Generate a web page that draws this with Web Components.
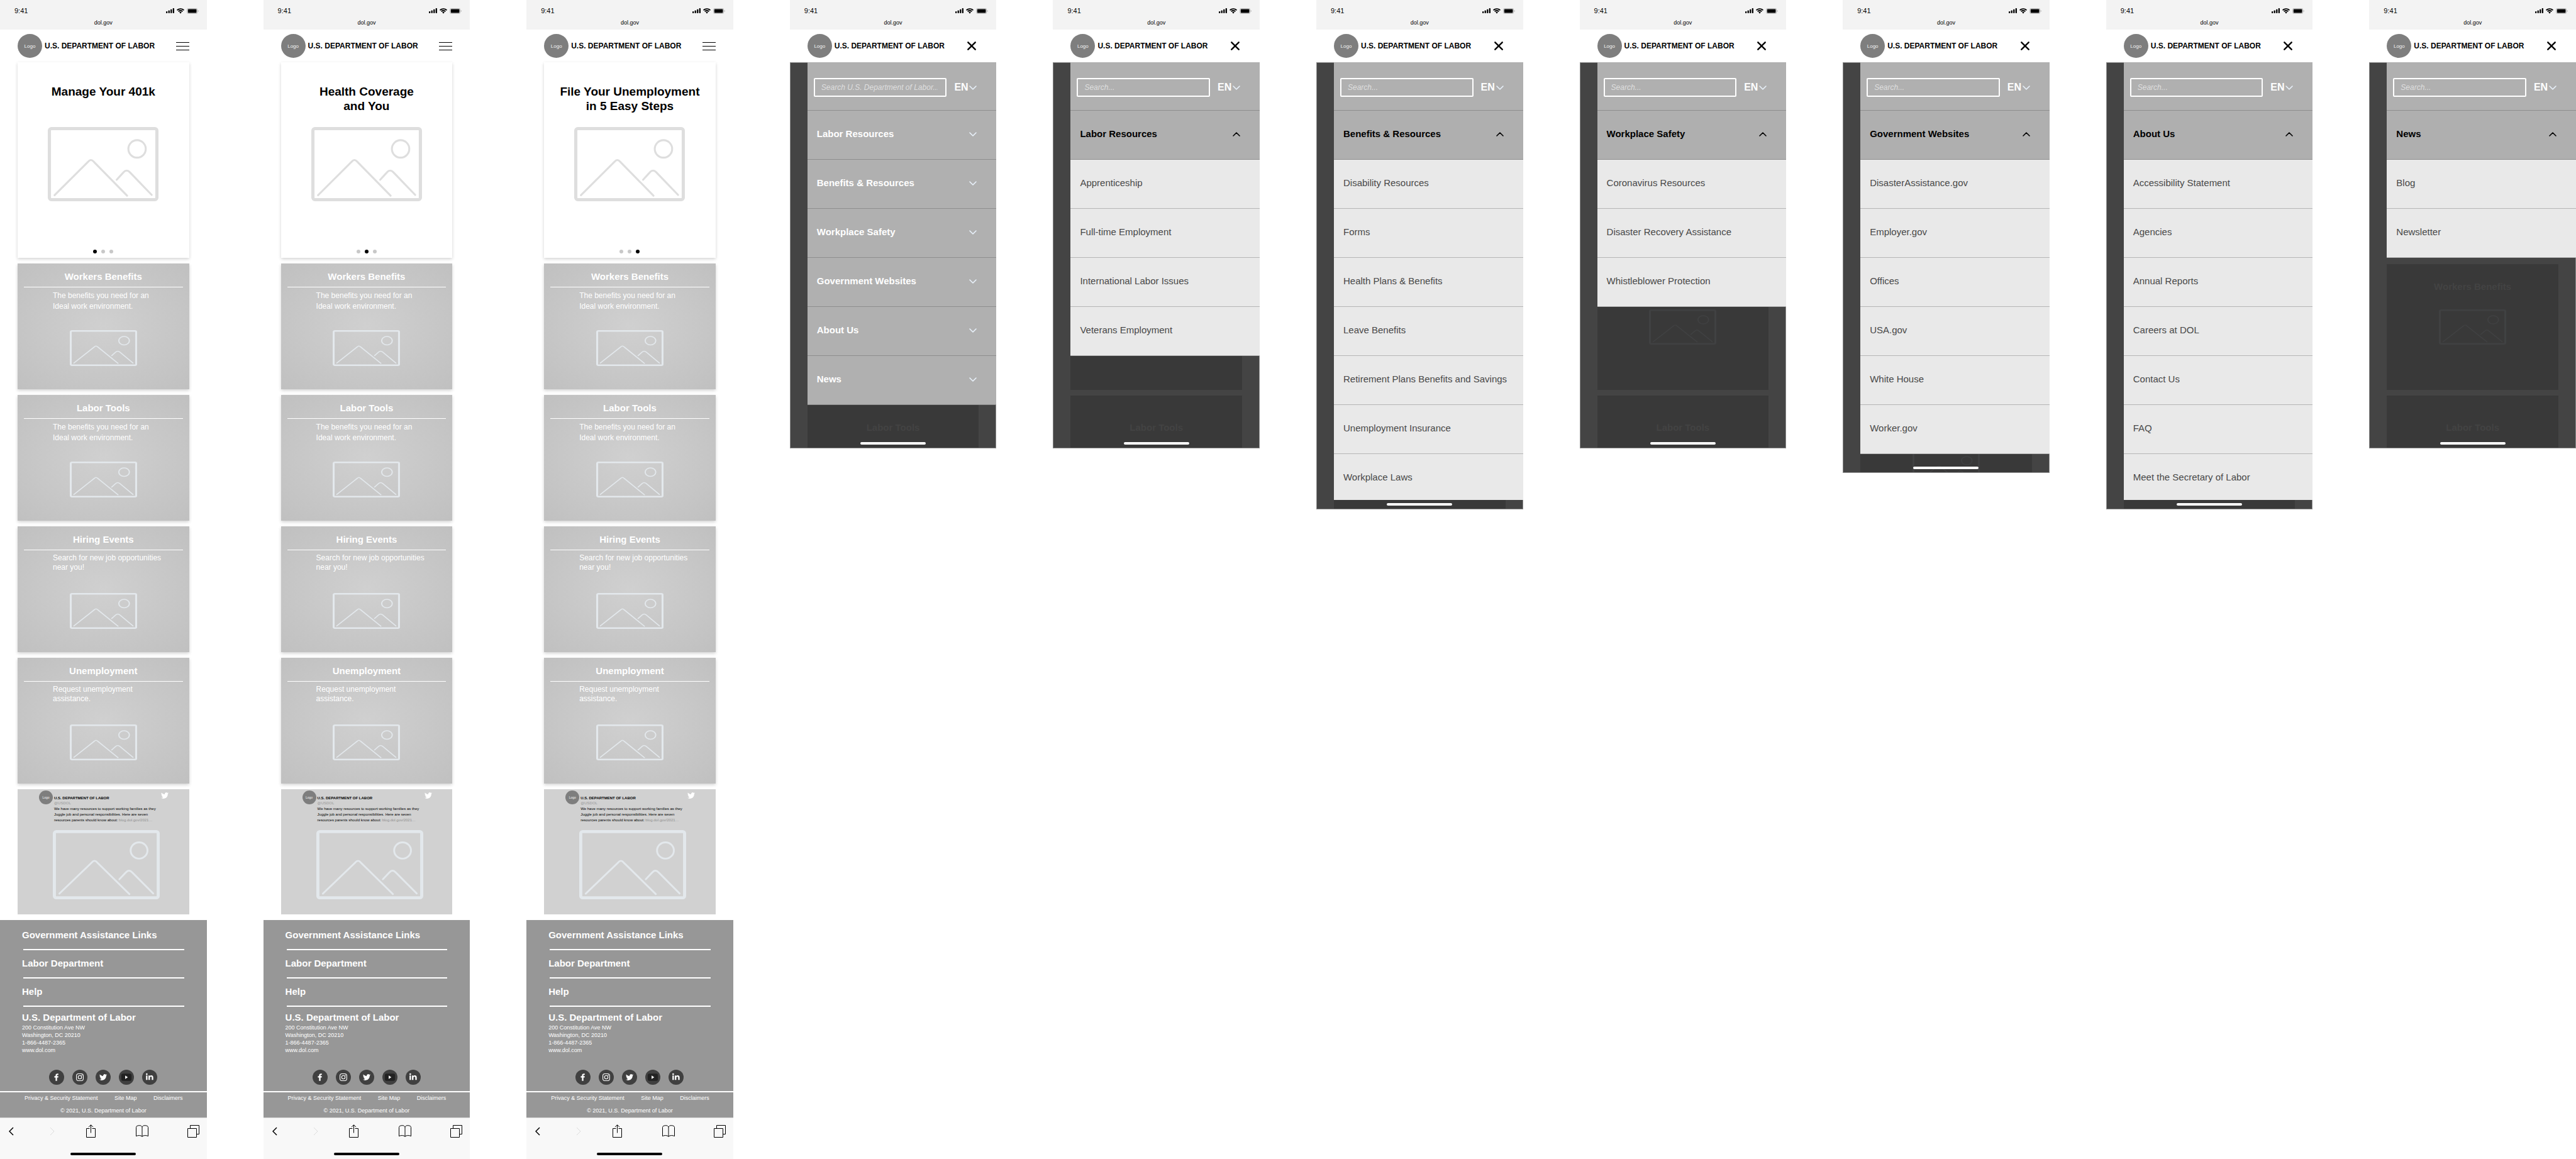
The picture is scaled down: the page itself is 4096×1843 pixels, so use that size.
<!DOCTYPE html>
<html lang="en">
<head>
<meta charset="utf-8">
<title>U.S. Department of Labor – mobile screens</title>
<style>
  body { margin: 0; background: #fff; font-family: "Liberation Sans", Arial, Helvetica, sans-serif; color: #000; }
  main { display: flex; align-items: flex-start; gap: 90px; }
  main > * { flex: 1 1 0; min-width: 0; }
</style>
</head>
<body>
<main>
  <dol-home-screen slide="1">Manage Your 401k</dol-home-screen>
  <dol-home-screen slide="2">Health Coverage<br>and You</dol-home-screen>
  <dol-home-screen slide="3">File Your Unemployment<br>in 5 Easy Steps</dol-home-screen>

  <dol-menu-screen placeholder="Search U.S. Department of Labor..." peek="tools">
    <dol-menu-group>Labor Resources</dol-menu-group>
    <dol-menu-group>Benefits &amp; Resources</dol-menu-group>
    <dol-menu-group>Workplace Safety</dol-menu-group>
    <dol-menu-group>Government Websites</dol-menu-group>
    <dol-menu-group>About Us</dol-menu-group>
    <dol-menu-group>News</dol-menu-group>
  </dol-menu-screen>

  <dol-menu-screen peek="tools">
    <dol-menu-group open>Labor Resources</dol-menu-group>
    <dol-menu-link>Apprenticeship</dol-menu-link>
    <dol-menu-link>Full-time Employment</dol-menu-link>
    <dol-menu-link>International Labor Issues</dol-menu-link>
    <dol-menu-link>Veterans Employment</dol-menu-link>
  </dol-menu-screen>

  <dol-menu-screen tail="short">
    <dol-menu-group open>Benefits &amp; Resources</dol-menu-group>
    <dol-menu-link>Disability Resources</dol-menu-link>
    <dol-menu-link>Forms</dol-menu-link>
    <dol-menu-link>Health Plans &amp; Benefits</dol-menu-link>
    <dol-menu-link>Leave Benefits</dol-menu-link>
    <dol-menu-link>Retirement Plans Benefits and Savings</dol-menu-link>
    <dol-menu-link>Unemployment Insurance</dol-menu-link>
    <dol-menu-link end>Workplace Laws</dol-menu-link>
  </dol-menu-screen>

  <dol-menu-screen peek="tools">
    <dol-menu-group open>Workplace Safety</dol-menu-group>
    <dol-menu-link>Coronavirus Resources</dol-menu-link>
    <dol-menu-link>Disaster Recovery Assistance</dol-menu-link>
    <dol-menu-link>Whistleblower Protection</dol-menu-link>
  </dol-menu-screen>

  <dol-menu-screen>
    <dol-menu-group open>Government Websites</dol-menu-group>
    <dol-menu-link>DisasterAssistance.gov</dol-menu-link>
    <dol-menu-link>Employer.gov</dol-menu-link>
    <dol-menu-link>Offices</dol-menu-link>
    <dol-menu-link>USA.gov</dol-menu-link>
    <dol-menu-link>White House</dol-menu-link>
    <dol-menu-link>Worker.gov</dol-menu-link>
  </dol-menu-screen>

  <dol-menu-screen tail="short">
    <dol-menu-group open>About Us</dol-menu-group>
    <dol-menu-link>Accessibility Statement</dol-menu-link>
    <dol-menu-link>Agencies</dol-menu-link>
    <dol-menu-link>Annual Reports</dol-menu-link>
    <dol-menu-link>Careers at DOL</dol-menu-link>
    <dol-menu-link>Contact Us</dol-menu-link>
    <dol-menu-link>FAQ</dol-menu-link>
    <dol-menu-link end>Meet the Secretary of Labor</dol-menu-link>
  </dol-menu-screen>

  <dol-menu-screen peek="workers tools">
    <dol-menu-group open>News</dol-menu-group>
    <dol-menu-link>Blog</dol-menu-link>
    <dol-menu-link>Newsletter</dol-menu-link>
  </dol-menu-screen>
</main>

<script>
const BASE = `
  *, *::before, *::after { box-sizing: border-box; }
  :host { display: block; }
  h1, h2, h3, p, ul { margin: 0; padding: 0; }
  button { border: 0; padding: 0; background: none; font: inherit; color: inherit; display: block; cursor: pointer; }
  a { color: inherit; text-decoration: none; }
  svg { display: block; }
`;
const BIRD = 'M23.953 4.57a10 10 0 01-2.825.775 4.958 4.958 0 002.163-2.723c-.951.555-2.005.959-3.127 1.184a4.92 4.92 0 00-8.384 4.482C7.69 8.095 4.067 6.13 1.64 3.162a4.822 4.822 0 00-.666 2.475c0 1.71.87 3.213 2.188 4.096a4.904 4.904 0 01-2.228-.616v.06a4.923 4.923 0 003.946 4.827 4.996 4.996 0 01-2.212.085 4.936 4.936 0 004.604 3.417 9.867 9.867 0 01-6.102 2.105c-.39 0-.779-.023-1.17-.067a13.995 13.995 0 007.557 2.209c9.053 0 13.998-7.496 13.998-13.985 0-.21 0-.42-.015-.63A9.935 9.935 0 0024 4.59z';

function define(name, render) {
  customElements.define(name, class extends HTMLElement {
    constructor() {
      super();
      this.attachShadow({ mode: 'open' });
    }
    connectedCallback() {
      if (!this.shadowRoot.childNodes.length) this.shadowRoot.innerHTML = render(this);
    }
  });
}

/* Placeholder picture: frame, sun and two hills; stretches to its host box. */
define('dol-picture', () => `
  <style>${BASE}
    svg { width: 100%; height: 100%; }
    g { fill: none; stroke: currentColor; stroke-width: 4; stroke-linecap: round; stroke-linejoin: round; }
  </style>
  <svg viewBox="0 0 229 153" preserveAspectRatio="none" aria-hidden="true"><g>
    <rect x="3.3" y="3.3" width="222.4" height="146.4" rx="4" stroke-width="6.6"/>
    <circle cx="184.7" cy="45.1" r="18"/>
    <path d="M14 140.5 83.5 71.5Q89.3 64.5 95 71.5L164 141.5"/>
    <path d="M142.6 108.7 156.5 93.5Q163 86 170 93.5L215 140"/>
  </g></svg>`);

define('dol-status-bar', () => `
  <style>${BASE}
    :host { background: #f3f3f3; padding: 10px 13px 5px 23px; }
    .row { display: flex; align-items: center; justify-content: space-between; height: 14px; font-size: 11px; line-height: 14px; }
    .icons { display: flex; align-items: center; gap: 4px; }
    .url { margin-top: 6px; padding-right: 10px; font-size: 9px; line-height: 12px; text-align: center; }
    .url { margin-left: -10px; padding: 0; margin-right: 0; }
  </style>
  <div class="row"><span>9:41</span>
    <span class="icons">
      <svg width="13" height="8" viewBox="0 0 17 10.5"><rect y="6.6" width="3" height="3.9" rx="1"/><rect x="4.7" y="4.6" width="3" height="5.9" rx="1"/><rect x="9.3" y="2.3" width="3" height="8.2" rx="1"/><rect x="14" width="3" height="10.5" rx="1"/></svg>
      <svg width="12" height="9" viewBox="0 0 15.4 11"><path d="M7.7 2.3c2.2 0 4.300.85 5.900 2.350.12.120.31.120.43 0l1.150-1.150a.32.32 0 000-.46C11-1 4.400-1 .22 3.040a.32.32 0 000 .46L1.370 4.650c.12.120.31.120.43 0A8.600 8.600 0 017.700 2.300zM7.700 6c1.200 0 2.370.450 3.270 1.250.12.120.31.110.43 0l1.150-1.160a.32.32 0 000-.46 7.120 7.120 0 00-9.700 0 .32.32 0 000 .46L4 7.250c.12.110.31.120.43 0A4.900 4.900 0 017.700 6zM9.930 8.540c.13-.13.120-.34-.01-.46a3.500 3.500 0 00-4.440 0c-.14.120-.14.330-.01.460l2 2c.13.130.33.130.46 0z"/></svg>
      <svg width="19" height="9" viewBox="0 0 24.300 11.800"><rect x=".5" y=".5" width="21" height="10.800" rx="2.700" fill="none" stroke="#a5a5a5"/><rect x="2" y="2" width="18" height="7.800" rx="1.400"/><path d="M22.900 4v4a2.200 2.200 0 000-4z" fill="#a5a5a5"/></svg>
    </span>
  </div>
  <div class="url">dol.gov</div>`);

define('dol-logo', () => `
  <style>${BASE}
    :host { display: flex; align-items: center; justify-content: center; flex: none; border-radius: 50%; background: #7e7e7e; color: #f2f2f2; }
  </style><span>Logo</span>`);

define('dol-header', el => `
  <style>${BASE}
    :host { background: #fff; }
    header { display: flex; align-items: center; height: 52px; padding: 0 28px; }
    dol-logo { width: 39px; height: 38px; font-size: 8px; }
    h1 { flex: 1; margin-left: 4px; font-size: 12px; line-height: 14px; white-space: nowrap; }
    .close { padding-right: 4px; }
  </style>
  <header>
    <dol-logo></dol-logo>
    <h1>U.S. DEPARTMENT OF LABOR</h1>
    ${el.hasAttribute('open')
      ? `<button class="close" aria-label="Close menu"><svg width="14" height="14" viewBox="0 0 14 14" stroke="#000" stroke-width="2.4" stroke-linecap="round"><path d="M1.300 1.300 12.700 12.700M12.700 1.300 1.300 12.700"/></svg></button>`
      : `<button aria-label="Open menu"><svg width="21" height="13" viewBox="0 0 21 13"><path d="M0 0h21v1H0zM0 6h21v1H0zM0 12h21v1H0z"/></svg></button>`}
  </header>`);

define('dol-hero', el => `
  <style>${BASE}
    :host { background: #fff; padding: 35px 0 7px; box-shadow: 0 2px 5px rgba(0,0,0,.18); text-align: center; }
    h2 { min-height: 46px; font-size: 19px; line-height: 23px; white-space: nowrap; }
    dol-picture { width: 176px; height: 118px; margin: 22px auto 0; color: #dedede; }
    nav { display: flex; justify-content: center; gap: 7px; margin-top: 77px; }
    nav button { width: 6px; height: 6px; border-radius: 50%; background: #c8c8c8; }
    nav button[aria-current] { background: #000; }
  </style>
  <h2><slot></slot></h2>
  <dol-picture></dol-picture>
  <nav>${[1, 2, 3].map(n => `<button aria-label="Slide ${n}" ${+el.getAttribute('slide') === n ? 'aria-current="true"' : ''}></button>`).join('')}</nav>`);

define('dol-card', el => `
  <style>${BASE}
    :host { padding: 12px 10px 37px; color: #fff; background: radial-gradient(ellipse at center, #d0d0d0, #c0c0c0); box-shadow: 0 2px 5px rgba(0,0,0,.18); }
    h2 { padding-bottom: 7px; border-bottom: 1px solid #fff; font-size: 15px; line-height: 18px; text-align: center; }
    p { min-height: 34px; margin: 5px 0 0 46px; font-size: 12px; line-height: 17px; white-space: nowrap; }
    :host([tight]) p { line-height: 15px; }
    dol-picture { width: 107px; height: 57px; margin: 29px auto 0; color: #e3e8ec; }
  </style>
  <h2>${el.getAttribute('heading')}</h2>
  <p><slot></slot></p>
  <dol-picture></dol-picture>`);

define('dol-tweet', () => `
  <style>${BASE}
    :host { background: #d1d1d1; }
    article { display: grid; grid-template-columns: 22px 170px 1fr; align-items: start; padding: 2px 0 24px 34px; font-size: 6px; }
    dol-logo { width: 22px; height: 22px; font-size: 5px; }
    .text { padding: 8px 0 0 2px; white-space: nowrap; }
    h3 { font-size: 6px; line-height: 8px; }
    .handle { line-height: 8px; color: #999; }
    .body { margin-top: 1px; line-height: 9px; }
    .body a { color: #8f8f8f; }
    .bird { margin: 2px 0 0 2px; }
    dol-picture { grid-column: 2; height: 110px; margin-top: 11px; color: #e3e8ec; }
  </style>
  <article>
    <dol-logo></dol-logo>
    <div class="text">
      <h3>U.S. DEPARTMENT OF LABOR</h3>
      <p class="handle">@USDOL</p>
      <p class="body">We have many resources to support working families as they<br>Juggle job and personal responsibilities. Here are seven<br>resources parents should know about: <a href="#">blog.dol.gov/2021…</a></p>
    </div>
    <svg class="bird" width="12" height="12" viewBox="0 0 24 24" fill="#fff" aria-label="Twitter"><path d="${BIRD}"/></svg>
    <dol-picture></dol-picture>
  </article>`);

define('dol-footer', () => `
  <style>${BASE}
    :host { padding: 15px 0 5px; background: #979797; color: #fff; font-size: 9px; line-height: 12px; }
    h2 { margin: 12px 35px 0; font-size: 15px; line-height: 18px; }
    h2:first-of-type { margin-top: 0; }
    h2:last-of-type { margin-top: 8px; }
    hr { height: 2px; margin: 13px 36px 0 37px; border: 0; background: #fff; }
    address { margin: 1px 35px 0; font-style: normal; }
    .social { display: flex; justify-content: center; gap: 13px; margin-top: 25px; padding-bottom: 10px; border-bottom: 2px solid #fff; }
    .links { display: flex; justify-content: space-between; padding: 3px 38px 0 39px; }
    .copy { margin-top: 8px; text-align: center; }
  </style>
  <footer>
    <h2>Government Assistance Links</h2><hr>
    <h2>Labor Department</h2><hr>
    <h2>Help</h2><hr>
    <h2>U.S. Department of Labor</h2>
    <address>200 Constitution Ave NW<br>Washington, DC 20210<br>1-866-4487-2365<br>www.dol.com</address>
    <div class="social">
      <a href="#" aria-label="Facebook"><svg width="24" height="24" viewBox="0 0 31 31"><circle cx="15.500" cy="15.500" r="15.500" fill="#404040"/><path fill="#fff" d="M13.400 23v-6.800h-2.500v-2.900h2.500v-1.700c0-2.300 1.500-3.600 3.600-3.600.9 0 1.700.1 2.100.2v2.500h-1.400c-1.100 0-1.300.6-1.300 1.300v1.300h2.700l-.4 2.900h-2.300V23z"/></svg></a>
      <a href="#" aria-label="Instagram"><svg width="24" height="24" viewBox="0 0 31 31"><circle cx="15.500" cy="15.500" r="15.500" fill="#404040"/><g fill="none" stroke="#fff" stroke-width="1.400"><rect x="8.500" y="8.500" width="14" height="14" rx="4"/><circle cx="15.500" cy="15.500" r="3.500"/></g><circle cx="19.700" cy="11.300" r="1" fill="#fff"/></svg></a>
      <a href="#" aria-label="Twitter"><svg width="24" height="24" viewBox="0 0 31 31"><circle cx="15.500" cy="15.500" r="15.500" fill="#404040"/><path fill="#fff" transform="translate(7.800 7.700) scale(.65)" d="${BIRD}"/></svg></a>
      <a href="#" aria-label="YouTube"><svg width="24" height="24" viewBox="0 0 31 31"><circle cx="15.500" cy="15.500" r="15.500" fill="#404040"/><rect x="5" y="8" width="21" height="15" rx="3.500" fill="#222"/><path fill="#fff" d="M13 12v7l5.500-3.500z"/></svg></a>
      <a href="#" aria-label="LinkedIn"><svg width="24" height="24" viewBox="0 0 31 31"><circle cx="15.500" cy="15.500" r="15.500" fill="#404040"/><g fill="#fff"><circle cx="9.500" cy="9.100" r="1.800"/><rect x="8" y="12" width="3" height="9"/><path d="M13 12h2.900v1.200c.5-.8 1.500-1.500 3-1.500 3 0 3.900 1.800 3.900 4.500V21h-3v-4.300c0-1.300-.2-2.400-1.700-2.400s-2.100 1.100-2.100 2.400V21h-3z"/></g></svg></a>
    </div>
    <div class="links"><a href="#">Privacy &amp; Security Statement</a><a href="#">Site Map</a><a href="#">Disclaimers</a></div>
    <p class="copy">© 2021, U.S. Department of Labor</p>
  </footer>`);

define('dol-toolbar', () => `
  <style>${BASE}
    :host { padding: 10px 0 6px; border-top: 1px solid #dcdcdc; background: #f8f8f8; }
    nav { display: grid; grid-template-columns: 65fr 58fr 79fr 82fr 19fr; align-items: center; justify-items: start; height: 21px; padding: 0 12px 0 14px; }
    svg { fill: none; stroke: #000; }
    .bar { width: 104px; height: 4px; margin: 24px auto 0; border-radius: 2px; background: #000; }
  </style>
  <nav>
    <button aria-label="Back"><svg width="8" height="14" viewBox="0 0 8 14" stroke-width="1.500"><path d="M7 1 1 7l6 6"/></svg></button>
    <button aria-label="Forward"><svg width="8" height="14" viewBox="0 0 8 14" style="stroke:#dcdcdc"><path d="m1 1 6 6-6 6"/></svg></button>
    <button aria-label="Share"><svg width="15" height="21" viewBox="0 0 15 21"><path d="M5.500 6.500h-5v14h14v-14h-5M7.500 13.500V1M4 4.200 7.500.7 11 4.200"/></svg></button>
    <button aria-label="Bookmarks"><svg width="20" height="19" viewBox="0 0 20 19"><path d="M10 18.500V3.500C9.500 1.500 7.800.7 5.700.7 2.800.7.500 1.800.500 3.500v14.200c2.500-1.600 7.500-1.600 9.500.500 2-2.100 7-2.100 9.500-.5V3.500C19.500 1.800 17.200.7 14.300.7 12.200.7 10.500 1.500 10 3.500"/></svg></button>
    <button aria-label="Tabs"><svg width="19" height="20" viewBox="0 0 19 20"><path d="M.5 5.500h14v14H.500zM4.500 5.500v-5h14v14h-4"/></svg></button>
  </nav>
  <div class="bar"></div>`);

define('dol-home-screen', el => `
  <style>${BASE}
    .feed { display: flex; flex-direction: column; gap: 9px; padding: 0 28px 9px; }
  </style>
  <dol-status-bar></dol-status-bar>
  <dol-header></dol-header>
  <div class="feed">
    <dol-hero slide="${el.getAttribute('slide')}"><slot></slot></dol-hero>
    <dol-card heading="Workers Benefits">The benefits you need for an<br>Ideal work environment.</dol-card>
    <dol-card heading="Labor Tools">The benefits you need for an<br>Ideal work environment.</dol-card>
    <dol-card tight heading="Hiring Events">Search for new job opportunities<br>near you!</dol-card>
    <dol-card tight heading="Unemployment">Request unemployment<br>assistance.</dol-card>
    <dol-tweet></dol-tweet>
  </div>
  <dol-footer></dol-footer>
  <dol-toolbar></dol-toolbar>`);

define('dol-menu-group', el => `
  <style>${BASE}
    button { display: flex; align-items: center; justify-content: space-between; width: 100%; padding: 28px 31px 31px 15px; border-bottom: 1px solid #8e8e8e; background: #b0b0b0; color: #fff; font-size: 15px; font-weight: bold; line-height: 18px; text-align: left; }
    svg { fill: none; stroke: #e8f1fa; stroke-width: 1.600; stroke-linecap: round; stroke-linejoin: round; }
    :host([open]) button { background: #afafaf; color: #000; }
    :host([open]) svg { stroke: #000; transform: scaleY(-1); }
  </style>
  <button aria-expanded="${el.hasAttribute('open')}"><span><slot></slot></span><svg width="12" height="7" viewBox="0 0 12 7"><path d="M1 1l5 5 5-5"/></svg></button>`);

define('dol-menu-link', () => `
  <style>${BASE}
    a { display: block; padding: 28px 15px 31px; border-bottom: 1px solid #b5b5b5; background: #e9e9e9; color: #484848; font-size: 15px; line-height: 18px; white-space: nowrap; }
    :host([end]) a { padding-bottom: 27px; border-bottom: 0; }
  </style>
  <a href="#"><slot></slot></a>`);

define('dol-menu-screen', el => {
  const peek = (el.getAttribute('peek') || '').split(' ');
  return `
  <style>${BASE}
    .stage { position: relative; min-height: 614px; padding: 0 0 30px 28px; }
    :host([tail="short"]) .stage { padding-bottom: 15px; }
    /* dimmed page lying under the opened drawer */
    .under { position: absolute; inset: 0; display: flex; flex-direction: column; gap: 9px; overflow: hidden; padding: 320px 27px 0; border: 1px solid #8c8c8c; background: #444; color: #434343; }
    .under section { flex: none; height: 200px; background: #393939; text-align: center; }
    .under h3 { height: 18px; font-size: 15px; line-height: 18px; }
    .workers { padding-top: 27px; }
    .tools { padding-top: 42px; }
    .under dol-picture { width: 107px; height: 56px; margin: 27px auto 0; color: #404142; }
    .drawer { position: relative; }
    .search { display: flex; align-items: center; height: 77px; padding: 4px 31px 0 10px; border-bottom: 1px solid #8e8e8e; background: #b0b0b0; }
    input { flex: 1; min-width: 0; height: 30px; margin: 0 12px 0 0; padding: 0 0 0 10px; border: 2px solid #fff; border-radius: 2px; outline: 0; background: transparent; color: #fff; font: italic 12px/16px "Liberation Sans", Arial, sans-serif; }
    input::placeholder { color: #dfdfdf; opacity: 1; }
    select { appearance: none; flex: none; width: 24px; margin: 0; padding: 0; border: 0; background: none; color: #fff; font: bold 16px/20px "Liberation Sans", Arial, sans-serif; }
    .search svg { fill: none; stroke: #e8f1fa; stroke-width: 1.600; stroke-linecap: round; stroke-linejoin: round; pointer-events: none; }
    .bar { position: absolute; left: 0; right: 0; bottom: 6px; width: 104px; height: 4px; margin: 0 auto; border-radius: 2px; background: #fff; }
  </style>
  <dol-status-bar></dol-status-bar>
  <dol-header open></dol-header>
  <div class="stage">
    <div class="under">
      <section class="workers"><h3>${peek.includes('workers') ? 'Workers Benefits' : ''}</h3><dol-picture></dol-picture></section>
      <section class="tools"><h3>${peek.includes('tools') ? 'Labor Tools' : ''}</h3><dol-picture></dol-picture></section>
    </div>
    <nav class="drawer">
      <div class="search">
        <input type="search" aria-label="Search" placeholder="${el.getAttribute('placeholder') || 'Search...'}">
        <select aria-label="Language"><option>EN</option></select>
        <svg width="12" height="7" viewBox="0 0 12 7"><path d="M1 1l5 5 5-5"/></svg>
      </div>
      <slot></slot>
    </nav>
    <div class="bar"></div>
  </div>`;
});
</script>
</body>
</html>
